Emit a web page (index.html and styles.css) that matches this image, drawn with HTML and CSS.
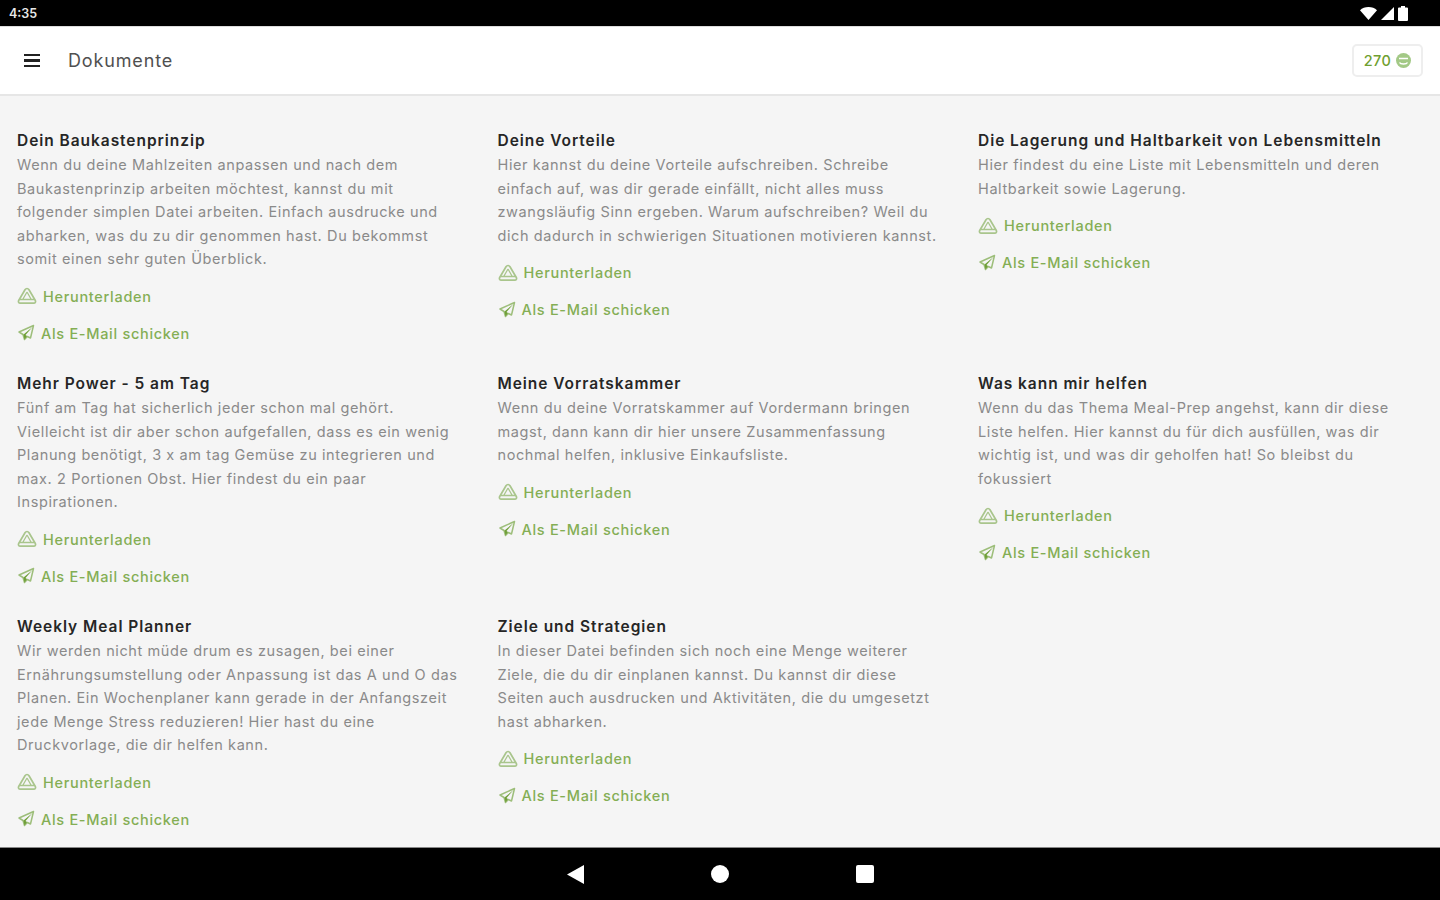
FILE: index.html
```html
<!DOCTYPE html>
<html lang="de">
<head>
    <meta charset="UTF-8">
    <meta name="viewport" content="width=device-width, initial-scale=1.0">
    <title>Dokumente</title>
    <link rel="stylesheet" href="styles.css">
</head>
<body>
    <svg class="defs" width="0" height="0">
        <symbol id="drive" viewBox="0 0 20 18">
            <path d="M10 1.500c.9 0 1.500.5 2 1.300l6.300 10.700c.7 1.300 0 2.700-1.500 2.700H3.200c-1.500 0-2.200-1.400-1.500-2.700L8 2.800c.5-.8 1.100-1.300 2-1.300z" fill="none" stroke="#a9c58c" stroke-width="1.700"/>
            <path d="M10 5l4 7M10 5l-4 7M3 12.500h14" fill="none" stroke="#a9c58c" stroke-width="1.300"/>
        </symbol>
        <symbol id="send" viewBox="0 0 18 18">
            <path d="M16.500 1.500L2 8l4 2.500 1.500 5 2.800-3 3.200 1.500z" fill="none" stroke="#9dbe7a" stroke-width="1.500" stroke-linejoin="round"/>
            <path d="M15.500 3L6.500 10.500l1 5 2.500-3.500-1.500-1z" fill="#6f9f38"/>
        </symbol>
    </svg>

    <div class="statusbar">
        <span class="time">4:35</span>
        <div class="status-icons">
            <svg width="17" height="13" viewBox="0 0 17 13"><path d="M0 3.200C2.200 1.200 5.200 0 8.500 0s6.300 1.200 8.500 3.200L8.500 13z" fill="#fff"/></svg>
            <svg width="13" height="13" viewBox="0 0 13 13"><path d="M13 0v13H0z" fill="#fff"/></svg>
            <svg width="10" height="15" viewBox="0 0 10 15"><path d="M3 0h4v1.500h2a1 1 0 0 1 1 1V14a1 1 0 0 1-1 1H1a1 1 0 0 1-1-1V2.500a1 1 0 0 1 1-1h2z" fill="#fff"/></svg>
        </div>
    </div>

    <header class="topbar">
        <div class="menu-icon"><span></span><span></span><span></span></div>
        <h1>Dokumente</h1>
        <div class="points">
            270
            <svg width="15" height="15" viewBox="0 0 15 15"><circle cx="7.500" cy="7.500" r="7.500" fill="#a3c986"/><path d="M3 5.500h9M3.500 9.500c1 2 7 2 8 0" fill="none" stroke="#fff" stroke-width="1.500"/></svg>
        </div>
    </header>

    <main class="documents">
        <section class="doc">
            <h2>Dein Baukastenprinzip</h2>
            <p>Wenn du deine Mahlzeiten anpassen und nach dem<br>Baukastenprinzip arbeiten möchtest, kannst du mit<br>folgender simplen Datei arbeiten. Einfach ausdrucke und<br>abharken, was du zu dir genommen hast. Du bekommst<br>somit einen sehr guten Überblick.</p>
            <a class="link"><svg class="ic-drive"><use href="#drive"/></svg>Herunterladen</a>
            <a class="link"><svg class="ic-send"><use href="#send"/></svg>Als E-Mail schicken</a>
        </section>
        <section class="doc">
            <h2>Deine Vorteile</h2>
            <p>Hier kannst du deine Vorteile aufschreiben. Schreibe<br>einfach auf, was dir gerade einfällt, nicht alles muss<br>zwangsläufig Sinn ergeben. Warum aufschreiben? Weil du<br>dich dadurch in schwierigen Situationen motivieren kannst.</p>
            <a class="link"><svg class="ic-drive"><use href="#drive"/></svg>Herunterladen</a>
            <a class="link"><svg class="ic-send"><use href="#send"/></svg>Als E-Mail schicken</a>
        </section>
        <section class="doc">
            <h2>Die Lagerung und Haltbarkeit von Lebensmitteln</h2>
            <p>Hier findest du eine Liste mit Lebensmitteln und deren<br>Haltbarkeit sowie Lagerung.</p>
            <a class="link"><svg class="ic-drive"><use href="#drive"/></svg>Herunterladen</a>
            <a class="link"><svg class="ic-send"><use href="#send"/></svg>Als E-Mail schicken</a>
        </section>
        <section class="doc">
            <h2>Mehr Power - 5 am Tag</h2>
            <p>Fünf am Tag hat sicherlich jeder schon mal gehört.<br>Vielleicht ist dir aber schon aufgefallen, dass es ein wenig<br>Planung benötigt, 3 x am tag Gemüse zu integrieren und<br>max. 2 Portionen Obst. Hier findest du ein paar<br>Inspirationen.</p>
            <a class="link"><svg class="ic-drive"><use href="#drive"/></svg>Herunterladen</a>
            <a class="link"><svg class="ic-send"><use href="#send"/></svg>Als E-Mail schicken</a>
        </section>
        <section class="doc">
            <h2>Meine Vorratskammer</h2>
            <p>Wenn du deine Vorratskammer auf Vordermann bringen<br>magst, dann kann dir hier unsere Zusammenfassung<br>nochmal helfen, inklusive Einkaufsliste.</p>
            <a class="link"><svg class="ic-drive"><use href="#drive"/></svg>Herunterladen</a>
            <a class="link"><svg class="ic-send"><use href="#send"/></svg>Als E-Mail schicken</a>
        </section>
        <section class="doc">
            <h2>Was kann mir helfen</h2>
            <p>Wenn du das Thema Meal-Prep angehst, kann dir diese<br>Liste helfen. Hier kannst du für dich ausfüllen, was dir<br>wichtig ist, und was dir geholfen hat! So bleibst du<br>fokussiert</p>
            <a class="link"><svg class="ic-drive"><use href="#drive"/></svg>Herunterladen</a>
            <a class="link"><svg class="ic-send"><use href="#send"/></svg>Als E-Mail schicken</a>
        </section>
        <section class="doc">
            <h2>Weekly Meal Planner</h2>
            <p>Wir werden nicht müde drum es zusagen, bei einer<br>Ernährungsumstellung oder Anpassung ist das A und O das<br>Planen. Ein Wochenplaner kann gerade in der Anfangszeit<br>jede Menge Stress reduzieren! Hier hast du eine<br>Druckvorlage, die dir helfen kann.</p>
            <a class="link"><svg class="ic-drive"><use href="#drive"/></svg>Herunterladen</a>
            <a class="link"><svg class="ic-send"><use href="#send"/></svg>Als E-Mail schicken</a>
        </section>
        <section class="doc">
            <h2>Ziele und Strategien</h2>
            <p>In dieser Datei befinden sich noch eine Menge weiterer<br>Ziele, die du dir einplanen kannst. Du kannst dir diese<br>Seiten auch ausdrucken und Aktivitäten, die du umgesetzt<br>hast abharken.</p>
            <a class="link"><svg class="ic-drive"><use href="#drive"/></svg>Herunterladen</a>
            <a class="link"><svg class="ic-send"><use href="#send"/></svg>Als E-Mail schicken</a>
        </section>
    </main>

    <nav class="navbar">
        <svg width="17" height="19" viewBox="0 0 17 19"><path d="M17 0v19L0 9.500z" fill="#fff"/></svg>
        <span class="nav-home"></span>
        <span class="nav-recent"></span>
    </nav>
</body>
</html>
```

FILE: styles.css
```css
* {
    box-sizing: border-box;
}
body {
    margin: 0;
    height: 900px;
    overflow: hidden;
    display: flex;
    flex-direction: column;
    font-family: 'Inter', sans-serif;
    background-color: #f5f5f5;
}
.defs {
    display: none;
}
.statusbar {
    height: 26px;
    flex: none;
    background-color: #000;
    color: #e8e8e8;
    display: flex;
    justify-content: space-between;
    align-items: center;
    padding: 0 32px 0 9px;
}
.time {
    font-size: 12.500px;
    font-weight: 600;
}
.status-icons {
    display: flex;
    align-items: center;
    gap: 4px;
}
.topbar {
    height: 70px;
    flex: none;
    background-color: #fff;
    border-bottom: 2px solid #e6e6e6;
    border-top: 1px solid #ddd;
    display: flex;
    align-items: center;
    padding: 0 17px 0 24px;
}
.menu-icon {
    width: 16px;
    display: flex;
    flex-direction: column;
    gap: 3px;
    margin-right: 28px;
}
.menu-icon span {
    height: 2.500px;
    background-color: #222;
}
.topbar h1 {
    flex: 1;
    margin: 0;
    font-size: 18px;
    letter-spacing: 0.85px;
    font-weight: 400;
    color: #505050;
}
.points {
    height: 33px;
    width: 71px;
    display: flex;
    align-items: center;
    justify-content: center;
    gap: 5px;
    border: 2px solid #eeeeee;
    border-radius: 5px;
    font-size: 14.500px;
    letter-spacing: 0.4px;
    font-weight: 500;
    color: #6fa030;
}
.documents {
    flex: 1;
    min-height: 0;
    overflow: hidden;
    display: grid;
    grid-template-columns: repeat(3, 480.500px);
    grid-auto-rows: 243px;
    padding: 33px 0 0 17px;
}
.doc h2 {
    margin: 0;
    font-size: 15.500px;
    letter-spacing: 0.95px;
    line-height: 24px;
    font-weight: 600;
    color: #262626;
}
.doc p {
    margin: 0 0 7px;
    font-size: 14.500px;
    letter-spacing: 0.6px;
    line-height: 23.600px;
    color: #8a8a8a;
}
.link {
    display: flex;
    align-items: center;
    height: 37px;
    font-size: 14.500px;
    letter-spacing: 0.7px;
    font-weight: 500;
    color: #84ae54;
}
.ic-drive {
    width: 20px;
    height: 18px;
    margin-right: 6px;
}
.ic-send {
    width: 18px;
    height: 18px;
    margin-right: 6px;
}
.navbar {
    height: 53px;
    flex: none;
    background-color: #000;
    border-top: 1px solid #888;
    display: flex;
    align-items: center;
    justify-content: center;
    gap: 127px;
}
.nav-home {
    width: 18px;
    height: 18px;
    border-radius: 50%;
    background-color: #fff;
}
.nav-recent {
    width: 18px;
    height: 18px;
    border-radius: 2px;
    background-color: #fff;
}
```
